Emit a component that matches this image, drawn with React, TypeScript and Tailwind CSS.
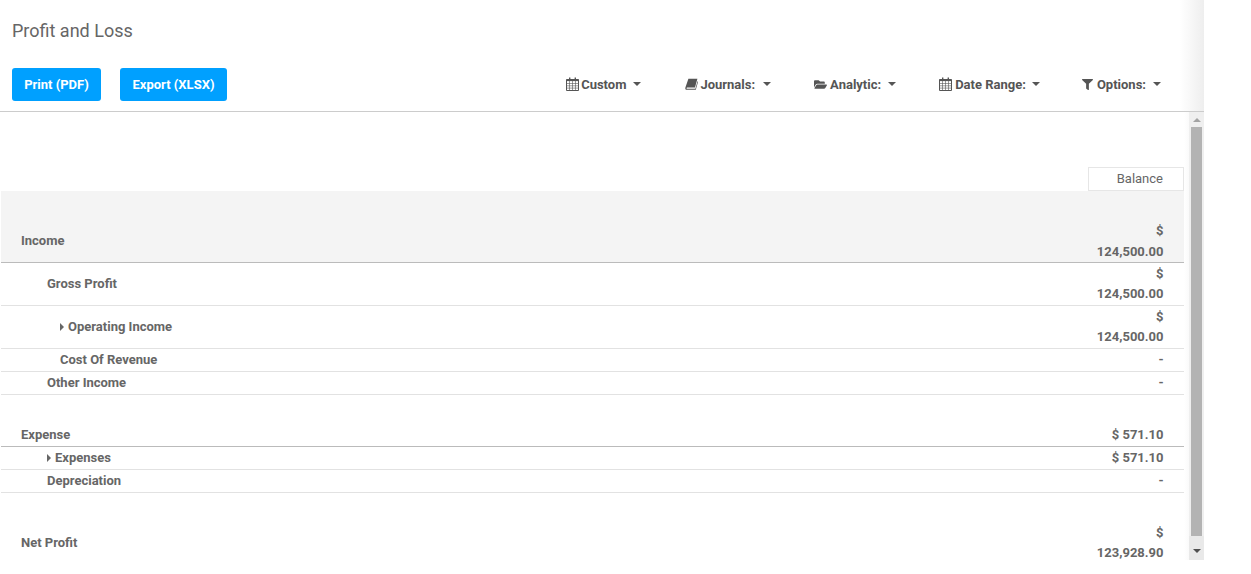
import React from "react";
import { FaFolderOpen, FaFilter } from "react-icons/fa";

const Cal = () => (
  <svg width="13" height="14" viewBox="0 0 13 14" className="shrink-0 -mt-[2px]" aria-hidden>
    <path d="M.5 2.5h12v11H.5z" fill="none" stroke="currentColor" strokeWidth="1" />
    <path d="M.5 2.5h12v1.6H.5z" fill="currentColor" />
    <path d="M3 .5h1.4v3H3zM8.6 .5H10v3H8.6z" fill="currentColor" />
    <path d="M1 6.5h11M1 8.8h11M1 11.1h11M3.5 4v9M6.5 4v9M9.5 4v9" stroke="currentColor" strokeWidth=".6" fill="none" />
  </svg>
);

const Book = () => (
  <svg width="13" height="13" viewBox="0 0 13 13" className="shrink-0" aria-hidden>
    <path d="M3.4 .8h9L10 9.4H2.1c-.6 0-.9 1.3-.1 1.3h8.4l2.2-7.6.4.8-2.2 7.9H1.8C.6 11.8 0 10.6.4 9.4z" fill="currentColor" />
  </svg>
);

const Caret = ({ right }: { right?: boolean }) =>
  right ? (
    <span className="inline-block w-0 h-0 border-y-[4px] border-y-transparent border-l-[4px] border-l-[#666] mr-1 align-[0px]" />
  ) : (
    <span className="inline-block w-0 h-0 border-x-[4px] border-x-transparent border-t-[4px] border-t-[#555]" />
  );

const Filter = ({
  icon,
  label,
  cls,
  gap,
  iconGap,
}: {
  icon: React.ReactNode;
  label: string;
  cls: string;
  gap: string;
  iconGap: string;
}) => (
  <div className={`flex items-center text-[13px] font-bold text-[#555] ${cls}`}>
    <span className={`w-[13px] ${iconGap} flex justify-center`}>{icon}</span>
    <span>{label}</span>
    <span className={`${gap} mt-[-2px] flex`}>
      <Caret />
    </span>
  </div>
);

const Row = ({
  label,
  pl,
  caret,
  value,
  h,
}: {
  label: string;
  pl: string;
  caret?: boolean;
  value: React.ReactNode;
  h: string;
}) => (
  <div className={`flex items-center border-b border-[#e2e2e2] ${h} ${pl}`}>
    <div className="flex-1 pb-[1px]">
      {caret && <Caret right />}
      {label}
    </div>
    <div className="w-[96px] pr-[20.5px] text-right">{value}</div>
  </div>
);

const Two = ({ v }: { v: string }) => (
  <div className="leading-[20.5px]">
    <div>$</div>
    <div>{v}</div>
  </div>
);

const One = ({ v }: { v: string }) => <div className="pb-[1px]">{v}</div>;

export default function App() {
  return (
    <div className="w-[1204px] h-[560px] bg-white flex flex-col overflow-hidden relative font-['Roboto',sans-serif] text-[#666]">
      <div className="h-[112px] border-b border-[#ccc] shrink-0 flex flex-col">
        <h1 className="text-[18px] leading-[20px] text-[#666] font-normal pl-3 pt-[21px]">Profit and Loss</h1>
        <div className="flex items-center mt-[27px]">
          <div className="flex gap-[19px] pl-3">
            <button className="h-[33px] w-[89px] rounded-[3px] bg-[#00a0ff] text-white text-[13px] font-bold">Print (PDF)</button>
            <button className="h-[33px] w-[107px] rounded-[3px] bg-[#00a0ff] text-white text-[13px] font-bold">Export (XLSX)</button>
          </div>
          <div className="ml-auto flex pr-[43px]">
            <Filter icon={<Cal />} label="Custom" cls="mr-[44px]" gap="ml-[7px]" iconGap="mr-[2px]" />
            <Filter icon={<Book />} label="Journals:" cls="mr-[43px]" gap="ml-[8px]" iconGap="mr-[2px]" />
            <Filter icon={<FaFolderOpen size={15} />} label="Analytic:" cls="mr-[43px]" gap="ml-[7px]" iconGap="mr-[3px]" />
            <Filter icon={<Cal />} label="Date Range:" cls="mr-[41px]" gap="ml-[6px]" iconGap="mr-[3px]" />
            <Filter icon={<FaFilter size={11} />} label="Options:" cls="" gap="ml-[7px]" iconGap="mr-[3px]" />
          </div>
        </div>
      </div>

      <div className="flex-1 flex min-h-0 overflow-hidden">
        <div className="flex-1 pl-px text-[13px] font-bold leading-[21px]">
          <div className="h-[79px] flex justify-end items-end">
            <div className="w-[96px] h-[24px] border border-[#e6e6e6] font-normal text-right pr-[20px] leading-[22px]">Balance</div>
          </div>
          <div className="h-[72px] bg-[#f4f4f4] border-b border-[#bbb] flex items-end pl-5">
            <div className="flex-1 pb-[11px]">Income</div>
            <div className="w-[96px] pr-[20.5px] text-right">
              <Two v="124,500.00" />
            </div>
          </div>
          <Row label="Gross Profit" pl="pl-[46px]" h="h-[43px]" value={<Two v="124,500.00" />} />
          <Row label="Operating Income" pl="pl-[59px]" h="h-[43px]" caret value={<Two v="124,500.00" />} />
          <Row label="Cost Of Revenue" pl="pl-[59px]" h="h-[23px]" value={<One v="-" />} />
          <Row label="Other Income" pl="pl-[46px]" h="h-[23px]" value={<One v="-" />} />
          <div className="h-[52px] border-b border-[#bbb] flex items-end pl-5 pb-[1px]">
            <div className="flex-1">Expense</div>
            <div className="w-[96px] pr-[20.5px] text-right">$ 571.10</div>
          </div>
          <Row label="Expenses" pl="pl-[46px]" h="h-[23px]" caret value={<One v="$ 571.10" />} />
          <Row label="Depreciation" pl="pl-[46px]" h="h-[23px]" value={<One v="-" />} />
          <div className="h-[67px] flex pl-5 pt-[29px]">
            <div className="flex-1 pt-[10px]">Net Profit</div>
            <div className="w-[96px] pr-[20.5px] pt-[0.5px] text-right">
              <Two v="123,928.90" />
            </div>
          </div>
        </div>
        <div className="w-5 shrink-0 flex">
          <div className="w-[5px] bg-gradient-to-r from-white to-[#fafafa]" />
          <div className="w-[15px] bg-[#efefef] flex flex-col">
            <div className="h-[15px] flex items-center justify-center">
              <span className="w-0 h-0 border-x-[4px] border-x-transparent border-b-[4px] border-b-[#a3a3a3]" />
            </div>
            <div className="ml-[2px] w-[11px] h-[409px] bg-[#b3b3b3]" />
            <div className="flex-1 flex items-center justify-center bg-[#e9e9e9]">
              <span className="w-0 h-0 border-x-[4px] border-x-transparent border-t-[4px] border-t-[#505050] mt-[6px]" />
            </div>
          </div>
        </div>
      </div>
      <div className="absolute right-0 top-0 h-[111px] w-6 bg-gradient-to-r from-white to-[#eeeeee] pointer-events-none" />
    </div>
  );
}
